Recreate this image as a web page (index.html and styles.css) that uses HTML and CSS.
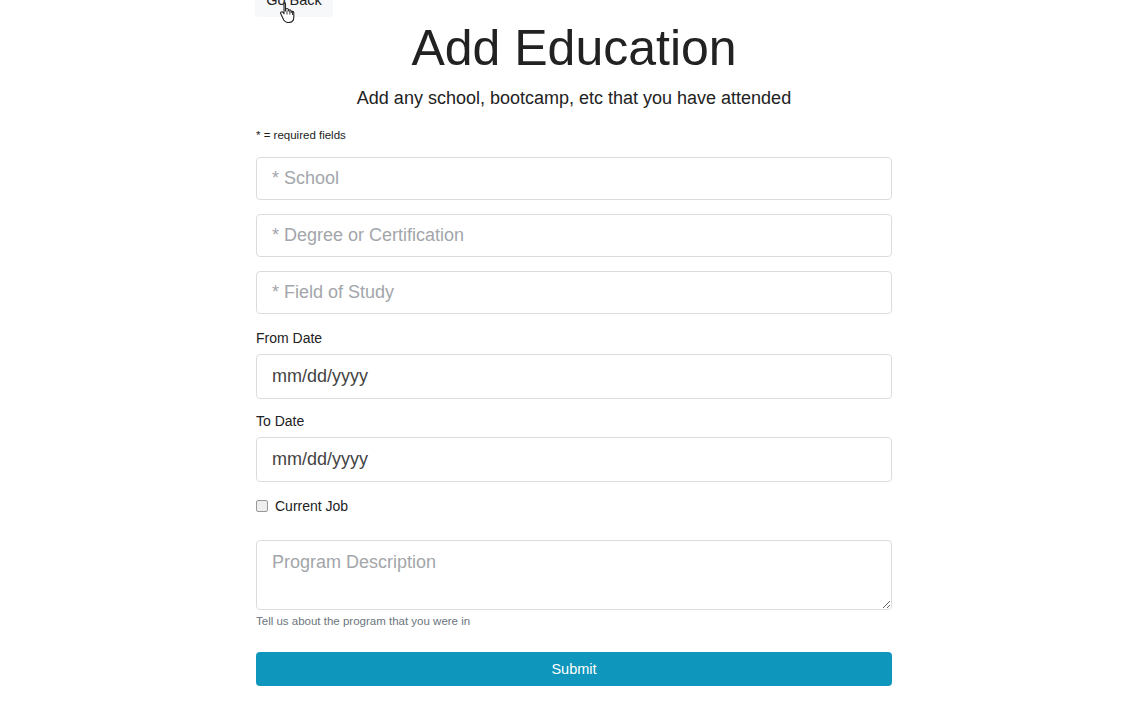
FILE: index.html
```html
<!DOCTYPE html>
<html>
<head>
<meta charset="utf-8">
<link rel="stylesheet" href="styles.css">
</head>
<body>
<div class="page">
  <div class="back-row">
    <a class="btn-back" href="#">Go Back</a>
    <svg class="cursor" width="18" height="22" viewBox="0 0 18 22">
      <path d="M5 1.5c.9 0 1.5.6 1.5 1.5v7l.1-1.2c.1-.8.7-1.3 1.4-1.3s1.3.5 1.4 1.3v1.2c.1-.8.7-1.3 1.4-1.3s1.3.5 1.4 1.3v1.5c.1-.7.6-1.1 1.3-1.1.8 0 1.3.6 1.3 1.4v4.5c0 3-2 5.2-5 5.2H9c-2 0-3.3-.9-4.3-2.5L1.8 12.8c-.5-.8-.2-1.6.5-1.9.7-.3 1.3 0 1.8.6l.9 1.3V3c0-.9.1-1.5 1-1.5z" fill="#fff" stroke="#222" stroke-width="1.1" stroke-linejoin="round"/>
      <path d="M8 9.5v4M10.8 9.5v4M13.5 11v3" stroke="#222" stroke-width="0.9"/>
    </svg>
  </div>
  <h1 class="title">Add Education</h1>
  <p class="lead">Add any school, bootcamp, etc that you have attended</p>
  <small class="req">* = required fields</small>
  <form class="form">
    <div class="group"><input class="field" type="text" placeholder="* School"></div>
    <div class="group"><input class="field" type="text" placeholder="* Degree or Certification"></div>
    <div class="group"><input class="field" type="text" placeholder="* Field of Study"></div>
    <div class="group">
      <div class="label first">From Date</div>
      <div class="field date">mm/dd/yyyy</div>
    </div>
    <div class="group">
      <div class="label">To Date</div>
      <div class="field date">mm/dd/yyyy</div>
    </div>
    <div class="check">
      <span class="box"></span>
      <span class="check-label">Current Job</span>
    </div>
    <div class="group">
      <textarea class="field area" placeholder="Program Description"></textarea>
      <div class="help">Tell us about the program that you were in</div>
    </div>
    <div class="submit">Submit</div>
  </form>
</div>
</body>
</html>
```
FILE: styles.css
```css
html, body {
  margin: 0;
  background: #fff;
}
body {
  padding-left: 22px;
  font-family: "Liberation Sans", Arial, sans-serif;
  color: #212529;
}
.page {
  width: 636px;
  margin: 0 auto;
}
.back-row {
  position: relative;
  display: flow-root;
  height: 17px;
}
.btn-back {
  display: block;
  width: 78px;
  height: 36px;
  margin-top: -19px;
  margin-left: -1px;
  background: #f7f8fa;
  border-radius: 4px;
  color: #222;
  text-decoration: none;
  font-size: 14.5px;
  line-height: 38px;
  text-align: center;
}
.cursor {
  position: absolute;
  left: 23px;
  top: 1px;
}
.title {
  margin: 1px 0 0;
  font-size: 50px;
  font-weight: 400;
  text-align: center;
  line-height: 60px;
  color: #222;
}
.lead {
  margin: 9px 0 0;
  font-size: 18px;
  text-align: center;
  line-height: 22px;
  color: #222;
}
.req {
  display: block;
  margin-top: 19px;
  font-size: 11.5px;
  line-height: 14px;
  color: #222;
}
.form {
  margin-top: 15px;
}
.group {
  margin-bottom: 14px;
}
.field {
  display: block;
  width: 100%;
  box-sizing: border-box;
  height: 43px;
  padding: 0 15px;
  border: 1px solid #dadde0;
  border-radius: 4px;
  font-family: "Liberation Sans", Arial, sans-serif;
  font-size: 18px;
  color: #495057;
  background: #fff;
  outline: none;
}
.field::placeholder {
  color: #a3a6aa;
}
.date {
  height: 45px;
  line-height: 43px;
  color: #444;
}
.label {
  font-size: 14px;
  line-height: 17px;
  color: #222;
  margin: 0 0 7px;
}
.label.first {
  margin-top: 16px;
}
.check {
  display: flex;
  align-items: center;
  margin-top: 15px;
  height: 18px;
}
.box {
  width: 10px;
  height: 10px;
  border: 1px solid #999;
  border-radius: 2px;
  background: #eee;
  margin-right: 7px;
}
.check-label {
  font-size: 14px;
  color: #222;
}
.area {
  margin-top: 25px;
  height: 70px;
  padding-top: 11px;
  resize: vertical;
}
.help {
  margin-top: 5px;
  font-size: 11.5px;
  color: #6c757d;
}
.submit {
  margin-top: 25px;
  height: 34px;
  line-height: 34px;
  background: #0f96bc;
  border-radius: 4px;
  color: #fff;
  text-align: center;
  font-size: 14.5px;
}
```
